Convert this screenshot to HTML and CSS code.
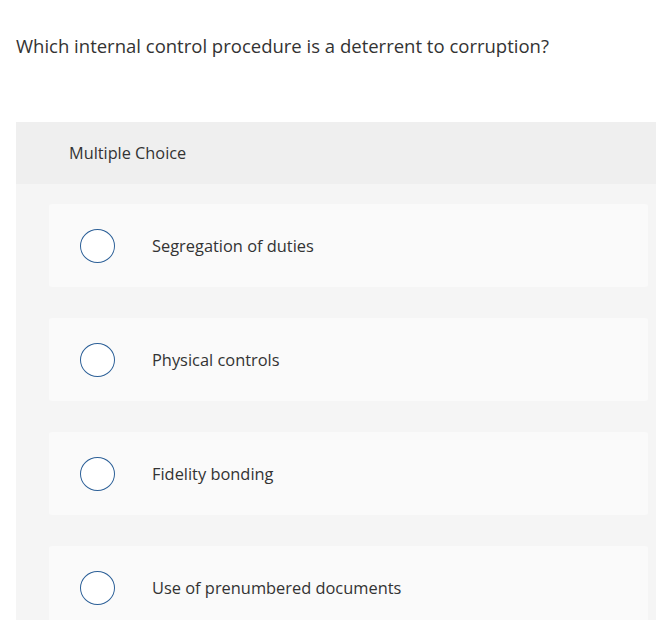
FILE: index.html
```html
<!DOCTYPE html>
<html lang="en">
<head>
    <meta charset="UTF-8">
    <title>Multiple Choice</title>
    <link rel="stylesheet" href="styles.css">
</head>
<body>

<p class="question">Which internal control procedure is a deterrent to corruption?</p>

<div class="panel">
    <div class="panel-head">Multiple Choice</div>
    <div class="choices">
        <label class="choice">
            <span class="radio"></span>
            <span class="choice-text">Segregation of duties</span>
        </label>
        <label class="choice">
            <span class="radio"></span>
            <span class="choice-text">Physical controls</span>
        </label>
        <label class="choice">
            <span class="radio"></span>
            <span class="choice-text">Fidelity bonding</span>
        </label>
        <label class="choice">
            <span class="radio"></span>
            <span class="choice-text">Use of prenumbered documents</span>
        </label>
    </div>
</div>

</body>
</html>
```

FILE: styles.css
```css
body {
    font-family: 'Open Sans', 'Liberation Sans', sans-serif;
    background-color: #ffffff;
    margin: 0;
    color: #333333;
}

.question {
    margin: 0;
    padding: 34px 0 0 16px;
    font-size: 18.5px;
    line-height: 23px;
    color: #333333;
}

/* panel with the answers */
.panel {
    margin: 65px 0 0 16px;
    background-color: #f5f5f5;
}

.panel-head {
    background-color: #efefef;
    height: 62px;
    padding-left: 53px;
    display: flex;
    align-items: center;
    font-size: 16.3px;
}

.choices {
    display: flex;
    flex-direction: column;
    gap: 31px;
    padding: 20px 8px 40px 33px;
}

.choice {
    display: flex;
    align-items: center;
    height: 83px;
    background-color: #fafafa;
    border-radius: 3px;
    padding-left: 31px;
    cursor: pointer;
}

.radio {
    box-sizing: border-box;
    width: 35px;
    height: 34px;
    border: 1.6px solid #2b5f97;
    border-radius: 50%;
    background-color: #ffffff;
    flex-shrink: 0;
}

.choice-text {
    margin-left: 37px;
    font-size: 16.4px;
}
```
